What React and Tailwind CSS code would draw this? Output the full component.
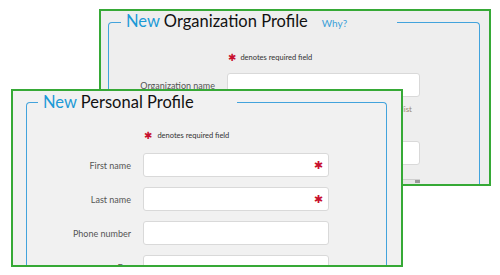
import React from 'react';

const font = { fontFamily: 'Lato, "Open Sans", sans-serif' };

function Star({ className = '' }) {
  return (
    <span
      className={`text-[#c8102e] leading-none ${className}`}
      style={{ fontFamily: '"DejaVu Sans", sans-serif' }}
    >
      ✱
    </span>
  );
}

function Row({ label, required, labelW, inputW, mt }) {
  return (
    <div className={`flex items-center ${mt}`}>
      <div className={`${labelW} shrink-0 pr-[12px] text-right text-[9px] text-[#555]`}>{label}</div>
      <div className={`${inputW} h-[24px] shrink-0 bg-white border border-[#d9d9d9] rounded-[3px] flex items-center justify-end pr-[5px]`}>
        {required && <Star className="text-[11px]" />}
      </div>
    </div>
  );
}

export default function App() {
  return (
    <div className="relative w-[500px] h-[275px] bg-white overflow-hidden" style={font}>
      {/* back window */}
      <div className="absolute left-[99px] top-[9px] w-[392px] h-[177px] border-2 border-[#36a936] bg-[#eeeeee] overflow-hidden">
        <fieldset className="ml-[7px] mr-[9px] h-[200px] border-t border-x border-[#42a3dc] rounded-tl-[4px] rounded-tr-[4px]">
          <legend className="ml-[12px] pl-[5px] pr-[50px] text-[16.5px] leading-[20px] text-[#111]">
            <span className="text-[#1c9ad6]">New</span> Organization Profile
            <span className="ml-[14px] text-[10px] text-[#3aa0d8]">Why?</span>
          </legend>
          <div className="mt-[19px] pl-[119px] flex items-center gap-[4px]">
            <Star className="text-[10px]" />
            <span className="text-[7.5px] text-[#333]">denotes required field</span>
          </div>
          <Row label="Organization name" labelW="w-[118px]" inputW="w-[193px]" mt="mt-[10px]" />
          <div className="w-[303px] text-right text-[8px] text-[#9a8a70] mt-[6px]">Not on list</div>
          <Row label="" labelW="w-[118px]" inputW="w-[193px]" mt="mt-[26px]" />
          <div className="ml-[293px] mt-[14px] w-[18px] h-[6px] border-t border-[#cfcfcf] bg-[#e6e6e6] flex justify-end">
            <div className="w-[5px] h-[3px] bg-[#9a9a9a]" />
          </div>
        </fieldset>
      </div>

      {/* front window */}
      <div className="absolute left-[11px] top-[89px] w-[392px] h-[178px] border-2 border-[#36a936] bg-[#f1f1f1] overflow-hidden">
        <fieldset className="ml-[13px] mr-[14px] mt-[1px] h-[200px] border-t border-x border-[#42a3dc] rounded-tl-[4px] rounded-tr-[4px]">
          <legend className="ml-[11px] pl-[5px] pr-[43px] text-[16.5px] leading-[20px] text-[#111]">
            <span className="text-[#1c9ad6]">New</span> Personal Profile
          </legend>
          <div className="mt-[18px] pl-[117px] flex items-center gap-[5px]">
            <Star className="text-[10px]" />
            <span className="text-[7.5px] text-[#333]">denotes required field</span>
          </div>
          <Row label="First name" required labelW="w-[116px]" inputW="w-[186px]" mt="mt-[12px]" />
          <Row label="Last name" required labelW="w-[116px]" inputW="w-[186px]" mt="mt-[10px]" />
          <Row label="Phone number" labelW="w-[116px]" inputW="w-[186px]" mt="mt-[10px]" />
          <Row label="Fax" labelW="w-[116px]" inputW="w-[186px]" mt="mt-[10px]" />
        </fieldset>
      </div>
    </div>
  );
}
